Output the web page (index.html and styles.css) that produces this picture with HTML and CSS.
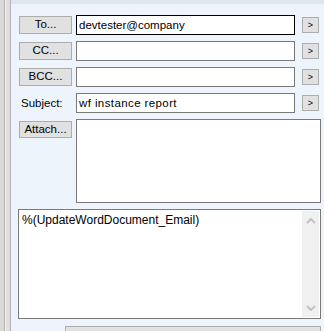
FILE: index.html
```html
<!DOCTYPE html>
<html>
<head>
<meta charset="utf-8">
<link rel="stylesheet" href="styles.css">
</head>
<body>
<div class="window">
  <div class="side"></div>
  <div class="panel">
    <div class="strip"></div>
    <div class="form">
      <div class="row">
        <div class="btn">To...</div>
        <div class="field focused">devtester@company</div>
        <div class="arrow">&gt;</div>
      </div>
      <div class="row">
        <div class="btn">CC...</div>
        <div class="field"></div>
        <div class="arrow">&gt;</div>
      </div>
      <div class="row">
        <div class="btn">BCC...</div>
        <div class="field"></div>
        <div class="arrow">&gt;</div>
      </div>
      <div class="row">
        <div class="label">Subject:</div>
        <div class="field subject">wf instance report</div>
        <div class="arrow">&gt;</div>
      </div>
      <div class="row">
        <div class="btn attach">Attach...</div>
        <div class="attachbox"></div>
      </div>
      <div class="body">
        <div class="bodytext">%(UpdateWordDocument_Email)</div>
        <div class="scroll">
          <svg width="10" height="6" viewBox="0 0 10 6"><path d="M1 5 L5 1 L9 5" fill="none" stroke="#c2c2c2" stroke-width="2"/></svg>
          <svg width="10" height="6" viewBox="0 0 10 6"><path d="M1 1 L5 5 L9 1" fill="none" stroke="#c2c2c2" stroke-width="2"/></svg>
        </div>
      </div>
      <div class="bottom">
        <div class="bottombtn"></div>
      </div>
    </div>
  </div>
</div>
</body>
</html>
```
FILE: styles.css
```css
html, body {
  margin: 0;
  padding: 0;
  background: #edf4fc;
}
body {
  font-family: "Liberation Sans", Arial, sans-serif;
  font-size: 11.5px;
  color: #000;
}
.window {
  display: flex;
  width: 324px;
  height: 331px;
  overflow: hidden;
}
.side {
  width: 11px;
  flex: none;
  background: linear-gradient(to right,
    #d9d9d9 0, #d9d9d9 4px,
    #b0b0b0 4px, #b0b0b0 5px,
    #f4f4f4 5px, #f4f4f4 6px,
    #dedede 6px, #dedede 10px,
    #b4b4b4 10px, #b4b4b4 11px);
}
.panel {
  flex: 1;
  background: #edf4fc;
  display: flex;
  flex-direction: column;
}
.strip {
  height: 4px;
  flex: none;
  background: #dfe6ef;
}
.form {
  padding: 11px 0 0 8px;
  display: flex;
  flex-direction: column;
  gap: 6px;
}
.row {
  display: flex;
  align-items: flex-start;
}
.btn {
  width: 51px;
  height: 16px;
  margin-top: 1px;
  border: 1px solid #adadad;
  background: #e1e1e1;
  display: flex;
  align-items: center;
  justify-content: center;
  line-height: 1;
}
.btn.attach {
  margin-top: 2px;
  height: 15px;
}
.label {
  width: 51px;
  height: 20px;
  padding-left: 2px;
  display: flex;
  align-items: center;
}
.field {
  box-sizing: border-box;
  width: 219px;
  height: 20px;
  margin-left: 4px;
  border: 1px solid #7a7a7a;
  background: #fff;
  padding-left: 2px;
  display: flex;
  align-items: center;
  white-space: nowrap;
}
.field.focused {
  border-color: #000;
}
.field.subject {
  letter-spacing: 0.4px;
}
.arrow {
  box-sizing: border-box;
  width: 17px;
  height: 16px;
  margin-left: 7px;
  margin-top: 2px;
  border: 1px solid #adadad;
  background: #e1e1e1;
  display: flex;
  align-items: center;
  justify-content: center;
  font-size: 9px;
  line-height: 1;
}
.attachbox {
  box-sizing: border-box;
  width: 245px;
  height: 84px;
  margin-left: 4px;
  border: 1px solid #7a7a7a;
  background: #fff;
}
.body {
  box-sizing: border-box;
  margin-left: -1px;
  width: 303px;
  height: 110px;
  flex: none;
  border: 1px solid #7a7a7a;
  background: #fff;
  display: flex;
  justify-content: space-between;
}
.bodytext {
  padding: 3px 0 0 3px;
  white-space: nowrap;
  font-size: 12px;
}
.scroll {
  width: 17px;
  margin: 1px 1px 1px 0;
  background: #f0f0f0;
  display: flex;
  flex-direction: column;
  justify-content: space-between;
  align-items: center;
  padding: 7px 0 6px;
  box-sizing: border-box;
}
.scroll svg {
  display: block;
}
.bottom {
  padding-left: 46px;
  margin-top: 1px;
}
.bottombtn {
  width: 254px;
  height: 20px;
  border: 1px solid #adadad;
  background: #e1e1e1;
}
```
